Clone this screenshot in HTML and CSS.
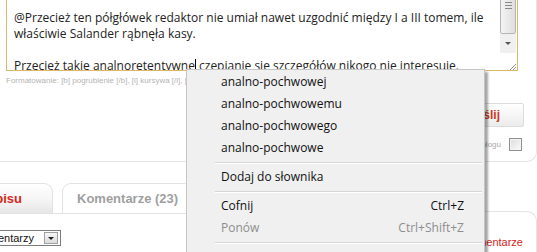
FILE: index.html
```html
<!DOCTYPE html>
<html lang="pl">

<head>
    <meta charset="UTF-8">
    <meta name="viewport" content="width=device-width, initial-scale=1.0">
    <title>Komentarz</title>
    <link rel="stylesheet" href="styles.css">
</head>

<body>
    <div class="card">
        <div class="editor">
            <div class="editor-text">
                @Przecież ten półgłówek redaktor nie umiał nawet uzgodnić między I a III tomem, ile<br>
                właściwie Salander rąbnęła kasy.<br>
                <br>
                Przecież takie analnoretentywne<span class="caret"></span> czepianie się szczegółów nikogo nie interesuje.
            </div>
            <div class="scrollbar">
                <div class="thumb"><span></span><span></span><span></span></div>
                <div class="arrow"></div>
                <div class="grip"></div>
            </div>
        </div>
        <div class="format">Formatowanie: [b] pogrubienie [/b], [i] kursywa [/i], [u] podkreślenie [/u]</div>
        <div class="actions">
            <button class="send">Wyślij</button>
        </div>
        <div class="notify">
            <span>Powiadom mnie na blogu</span>
            <span class="checkbox"></span>
        </div>
    </div>

    <div class="lower">
        <div class="lower-left">
            <div class="tabs">
                <div class="tab tab-first"><span>Treść wpisu</span></div>
                <div class="tab tab-second"><span>Komentarze (23)</span></div>
            </div>
            <div class="select">
                <span class="select-text">Wszystkich komentarzy</span>
                <span class="select-btn"></span>
            </div>
        </div>
        <div class="side-box">
            <a class="side-link">Dodaj komentarze</a>
        </div>
    </div>

    <div class="menu">
        <div class="menu-item">analno-pochwowej</div>
        <div class="menu-item">analno-pochwowemu</div>
        <div class="menu-item">analno-pochwowego</div>
        <div class="menu-item">analno-pochwowe</div>
        <div class="menu-sep"></div>
        <div class="menu-item">Dodaj do słownika</div>
        <div class="menu-sep"></div>
        <div class="menu-item"><span>Cofnij</span><span>Ctrl+Z</span></div>
        <div class="menu-item disabled"><span>Ponów</span><span>Ctrl+Shift+Z</span></div>
        <div class="menu-sep"></div>
        <div class="menu-item">Wytnij</div>
    </div>
</body>

</html>
```

FILE: styles.css
```css
* {
    box-sizing: border-box;
}

body {
    margin: 0;
    padding: 0;
    width: 537px;
    height: 252px;
    overflow: hidden;
    position: relative;
    background: #fff;
    font-family: "Open Sans", sans-serif;
}

.card {
    width: 537px;
    margin-top: -10px;
    border-right: 1px solid #e4e4e4;
    border-bottom: 1px solid #e4e4e4;
    border-bottom-right-radius: 10px;
    padding-bottom: 10px;
}

.editor {
    margin-left: 6px;
    width: 512px;
    height: 81px;
    border: 1px solid #dcb86f;
    display: flex;
}

.editor-text {
    flex: 1;
    overflow: hidden;
    white-space: nowrap;
    padding: 19px 0 0 7px;
    font-size: 12px;
    line-height: 16px;
    color: #222;
}

.caret {
    display: inline-block;
    width: 0;
    height: 14px;
    border-left: 1px solid #000;
    vertical-align: -3px;
}

.scrollbar {
    width: 16px;
    margin-right: 1px;
    display: flex;
    flex-direction: column;
}

.thumb {
    height: 43px;
    border: 1px solid #b5b5b5;
    border-radius: 2px;
    background: linear-gradient(to right, #f4f4f4, #dedede);
    display: flex;
    flex-direction: column;
    align-items: center;
    padding-top: 10px;
    gap: 2px;
}

.thumb span {
    width: 7px;
    height: 1px;
    background: #8a8a8a;
}

.arrow {
    height: 19px;
    background: #f0f0f0;
    display: flex;
    align-items: center;
    justify-content: center;
}

.arrow::after {
    content: "";
    border-left: 3px solid transparent;
    border-right: 3px solid transparent;
    border-top: 3px solid #555;
}

.grip {
    flex: 1;
    background:
        linear-gradient(135deg, transparent 60%, #9a9a9a 60%, #9a9a9a 66%, transparent 66%, transparent 78%, #9a9a9a 78%, #9a9a9a 84%, transparent 84%) right bottom / 8px 8px no-repeat;
}

.format {
    margin: 4px 0 0 6px;
    font-family: "Liberation Sans", Arial, sans-serif;
    font-size: 8px;
    line-height: 12px;
    color: #b4b4b4;
    white-space: nowrap;
}

.actions {
    display: flex;
    justify-content: flex-end;
    margin-top: 16px;
    padding-right: 12px;
}

.send {
    height: 24px;
    padding: 0 23px;
    border: 1px solid #dcdcdc;
    border-radius: 2px;
    background: linear-gradient(#fff, #ececec);
    color: #c93a1f;
    font-family: "Liberation Sans", Arial, sans-serif;
    font-weight: bold;
    font-size: 12px;
}

.notify {
    display: flex;
    justify-content: flex-end;
    align-items: center;
    gap: 8px;
    margin-top: 11px;
    padding-right: 14px;
    font-family: "Liberation Sans", Arial, sans-serif;
    font-size: 8px;
    color: #a8a8a8;
}

.checkbox {
    width: 13px;
    height: 13px;
    border: 1px solid #8f8f8f;
    background: linear-gradient(135deg, #dcdcdc, #fbfbfb);
    box-shadow: inset 0 0 0 1px #f4f4f4;
}

.lower {
    display: flex;
    justify-content: space-between;
    align-items: flex-start;
}

.lower-left {
    padding-top: 22px;
    width: 260px;
}

.tabs {
    display: flex;
    align-items: flex-end;
    gap: 9px;
    margin-left: -78px;
    height: 30px;
    border-bottom: 1px solid #e2e2e2;
}

.tab {
    flex-shrink: 0;
    height: 30px;
    font-family: "Liberation Sans", Arial, sans-serif;
    font-weight: bold;
    font-size: 13px;
    white-space: nowrap;
    display: flex;
    align-items: center;
    border: 1px solid #e2e2e2;
    border-bottom: none;
    border-radius: 9px 9px 0 0;
}

.tab-first {
    width: 131px;
    justify-content: flex-end;
    padding-right: 30px;
    color: #d5281a;
    background: linear-gradient(#fff, #f6f6f6 50%, #e6e6e6);
}

.tab-second {
    padding: 0 14px;
    color: #9f9f9f;
    background: #fff;
}

.select {
    display: flex;
    align-items: center;
    margin: 16px 0 0 -70px;
    width: 131px;
    height: 16px;
    border: 1px solid #7d7d7d;
    background: #fff;
    font-family: "Liberation Sans", Arial, sans-serif;
    font-size: 11px;
    color: #111;
}

.select-text {
    flex: 1;
    min-width: 0;
    overflow: hidden;
    direction: rtl;
    text-align: right;
    padding: 0 10px 0 0;
    white-space: nowrap;
}

.select-btn {
    flex-shrink: 0;
    width: 14px;
    height: 12px;
    margin-right: 2px;
    border: 1px solid #a0a0a0;
    background: linear-gradient(#f6f6f6, #dcdcdc);
    display: flex;
    align-items: center;
    justify-content: center;
}

.select-btn::after {
    content: "";
    border-left: 3px solid transparent;
    border-right: 3px solid transparent;
    border-top: 3px solid #222;
}

.side-box {
    margin-top: 49px;
    width: 110px;
    height: 60px;
    border-top: 1px solid #e4e4e4;
    border-right: 1px solid #e4e4e4;
    border-top-right-radius: 10px;
    padding: 17px 13px 0 0;
    text-align: right;
}

.side-link {
    font-family: "Liberation Sans", Arial, sans-serif;
    font-size: 11px;
    color: #d5281a;
    white-space: nowrap;
}

.menu {
    position: absolute;
    left: 186px;
    top: 69px;
    width: 299px;
    height: 200px;
    padding-top: 1px;
    background: #f0f0f0;
    border: 1px solid #c6c6c6;
    box-shadow: 3px 3px 2px rgba(0, 0, 0, 0.35);
    font-size: 12px;
    color: #111;
}

.menu-item {
    height: 22px;
    line-height: 22px;
    padding: 0 20px 0 34px;
    display: flex;
    justify-content: space-between;
}

.menu-item.disabled {
    color: #8e8e8e;
}

.menu-sep {
    margin: 3px 2px 2px 28px;
    height: 2px;
    border-top: 1px solid #d7d7d7;
    border-bottom: 1px solid #fff;
}
```
